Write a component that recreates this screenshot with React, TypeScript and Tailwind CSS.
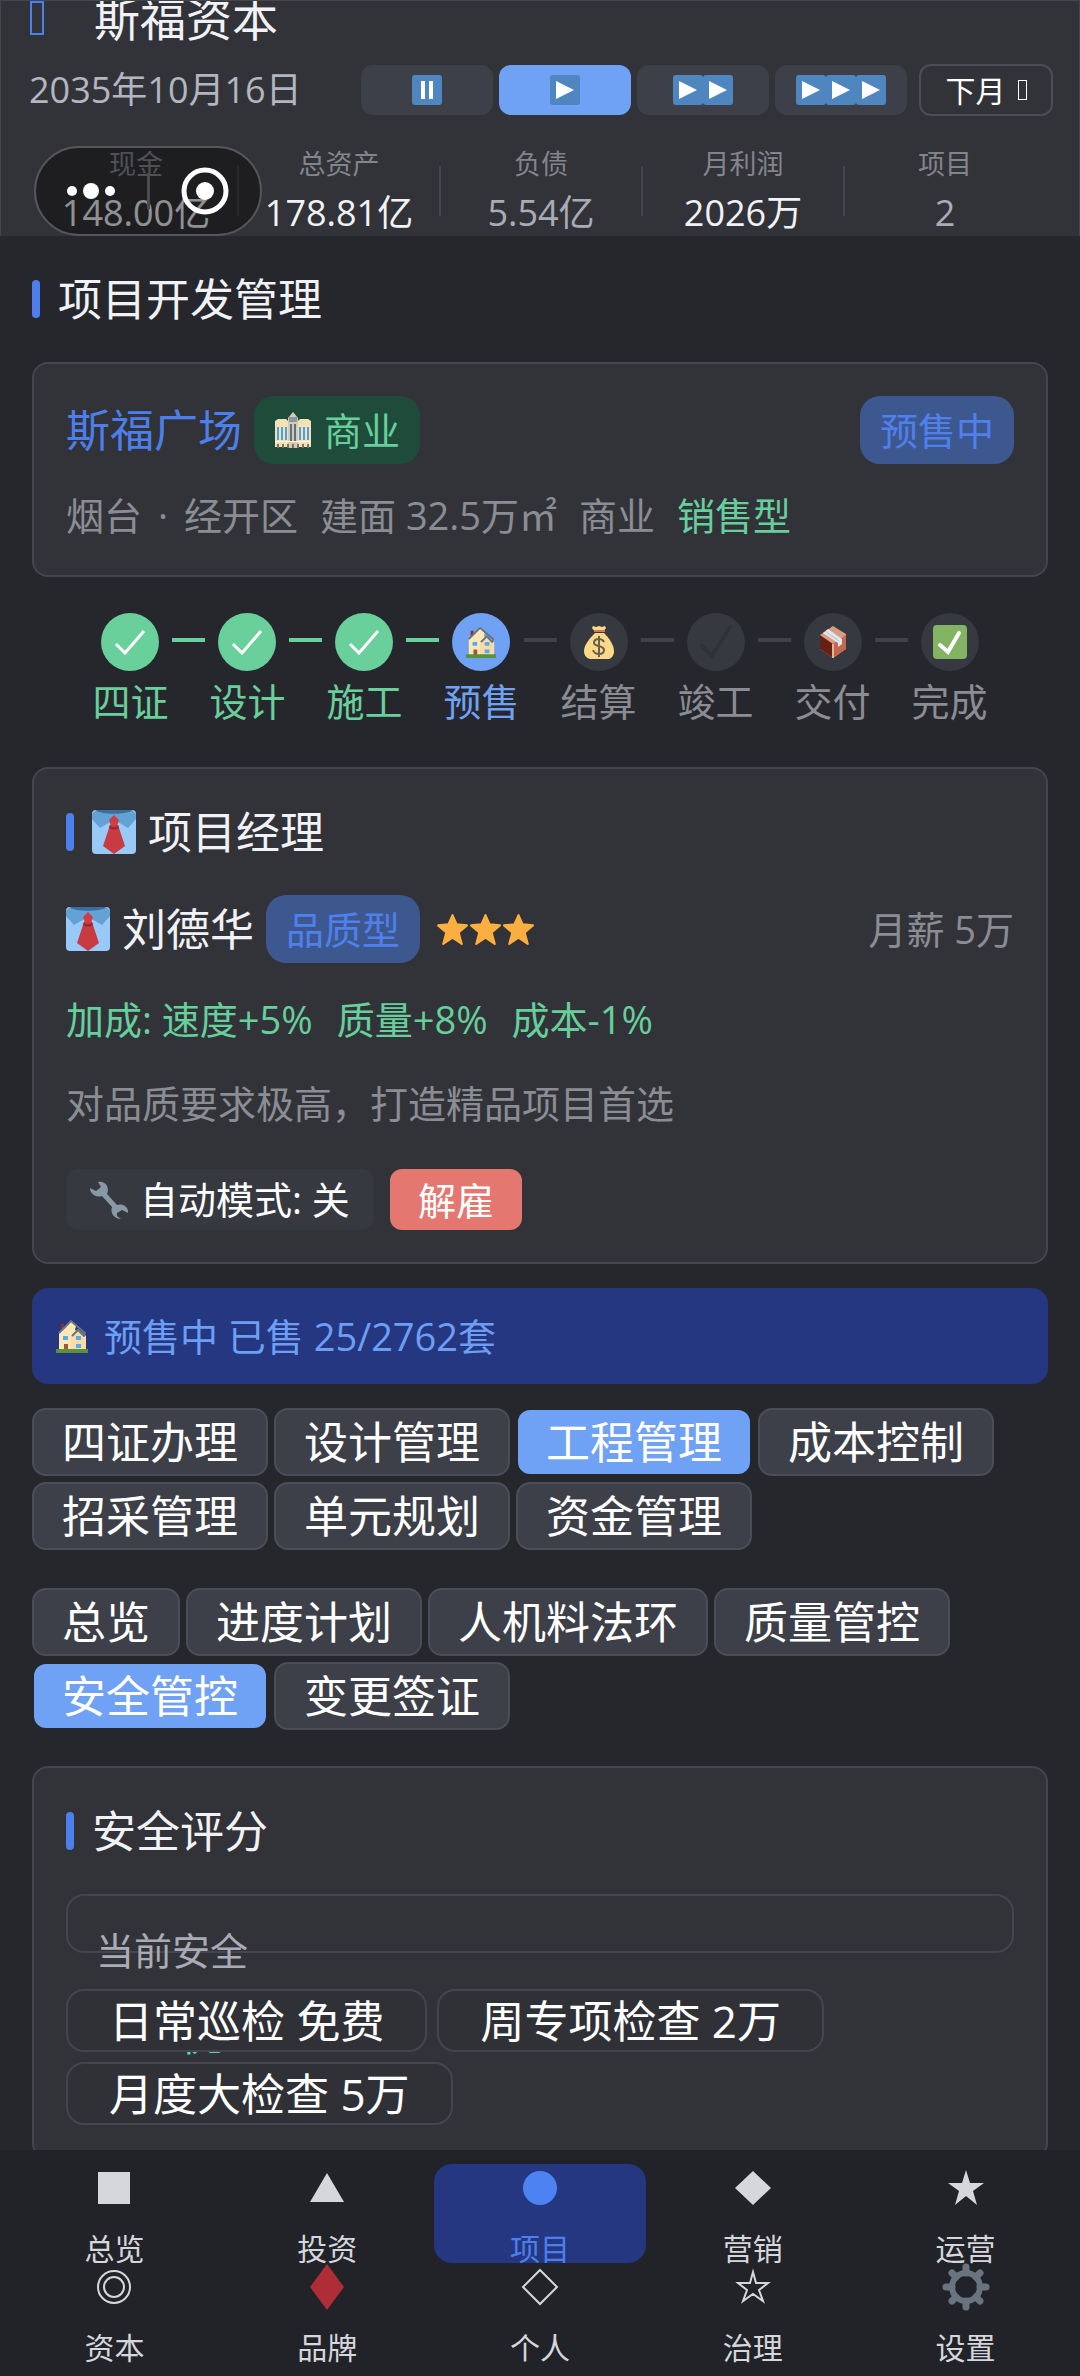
import { useState } from "react";
import type { ReactNode } from "react";
import clsx from "clsx";

// ─── Data ───────────────────────────────────────────────────────

const STATS = [
  { label: "现金", value: "148.00亿", strong: true },
  { label: "总资产", value: "178.81亿", strong: true },
  { label: "负债", value: "5.54亿", strong: false },
  { label: "月利润", value: "2026万", strong: true },
  { label: "项目", value: "2", strong: false },
];

type StepState = "done" | "active" | "todo";

const STEPS: { label: string; state: StepState; icon: ReactNode }[] = [
  { label: "四证", state: "done", icon: <CheckThin /> },
  { label: "设计", state: "done", icon: <CheckThin /> },
  { label: "施工", state: "done", icon: <CheckThin /> },
  { label: "预售", state: "active", icon: <House className="size-8" /> },
  { label: "结算", state: "todo", icon: <MoneyBag /> },
  { label: "竣工", state: "todo", icon: <CheckDark /> },
  { label: "交付", state: "todo", icon: <Parcel /> },
  { label: "完成", state: "todo", icon: <CheckBox /> },
];

const MODULE_TABS = ["四证办理", "设计管理", "工程管理", "成本控制", "招采管理", "单元规划", "资金管理"];
const ENGINEERING_TABS = ["总览", "进度计划", "人机料法环", "质量管控", "安全管控", "变更签证"];
const CHECKS = ["日常巡检 免费", "周专项检查 2万", "月度大检查 5万"];

const NAV = [
  { label: "总览", icon: <NavSquare /> },
  { label: "投资", icon: <NavTriangle /> },
  { label: "项目", icon: <NavDot /> },
  { label: "营销", icon: <NavDiamond /> },
  { label: "运营", icon: <NavStar /> },
  { label: "资本", icon: <NavRings /> },
  { label: "品牌", icon: <NavRedDiamond /> },
  { label: "个人", icon: <NavDiamondOutline /> },
  { label: "治理", icon: <NavStarOutline /> },
  { label: "设置", icon: <NavGear /> },
];

// ─── Emoji icons ────────────────────────────────────────────────

function PlayKey() {
  return (
    <svg viewBox="0 0 30 30" className="size-[30px]" aria-hidden="true">
      <rect width="30" height="30" rx="3" fill="#4f86bf" />
      <path d="M6 6v18l18-9z" fill="#fff" />
    </svg>
  );
}

function PauseKey() {
  return (
    <svg viewBox="0 0 30 30" className="size-[30px]" aria-hidden="true">
      <rect width="30" height="30" rx="3" fill="#4f86bf" />
      <path d="M9 6h4v18H9zM17 6h4v18h-4z" fill="#fff" />
    </svg>
  );
}

function CheckThin() {
  return (
    <svg viewBox="0 0 32 26" className="w-8" fill="none" stroke="#fff" strokeWidth="3" aria-hidden="true">
      <path d="M2 15l9 9L30 2" />
    </svg>
  );
}

function CheckDark() {
  return (
    <svg viewBox="0 0 36 36" className="size-9" fill="none" stroke="#2f3239" strokeWidth="4" strokeLinecap="round" aria-hidden="true">
      <path d="M4 22l10 10L32 3" />
    </svg>
  );
}

function CheckBox() {
  return (
    <svg viewBox="0 0 34 34" className="size-[34px]" aria-hidden="true">
      <rect width="34" height="34" rx="4" fill="#82b463" />
      <path d="M7 20l8 7L26 8" fill="none" stroke="#fff" strokeWidth="4" strokeLinecap="round" />
    </svg>
  );
}

function House({ className }: { className?: string }) {
  return (
    <svg viewBox="0 0 32 34" className={className} aria-hidden="true">
      <path d="M5 5h3v8H5z" fill="#8c2f33" />
      <path d="M3 14L15 2l5 5-1 4 9 5v15H3z" fill="#ffe8b6" />
      <path d="M15 31V17l7-7 8 7v14z" fill="#fbdba6" />
      <path d="M3 14L15 2l14 12-1 3-6-6-6 6" fill="none" stroke="#66757f" strokeWidth="2" strokeLinejoin="round" />
      <path d="M7 17h5v4H7zM20 17h5v4h-5zM20 25h5v4h-5z" fill="#55acee" />
      <path d="M8 25h4v6H8z" fill="#a0563c" />
      <path d="M0 30h32v4H0z" fill="#5c913b" />
    </svg>
  );
}

function MoneyBag() {
  return (
    <svg viewBox="0 0 30 34" className="h-[34px]" aria-hidden="true">
      <path d="M9 1l3 1 3-1 3 1 3-1 1 2-3 4h-8L8 3z" fill="#fdd888" />
      <path d="M11 8h9c5 5 10 12 10 18 0 4-2 7-5 8H6c-4-1-6-4-6-8C0 20 6 13 11 8z" fill="#fdd888" />
      <path d="M10 6h11" stroke="#d47a52" strokeWidth="2" />
      <path d="M20 17c-1-2-3-3-5-3-3 0-5 1-5 4 0 4 10 2 10 7 0 3-2 4-5 4s-5-1-6-4M15 11v21" fill="none" stroke="#67604f" strokeWidth="2" />
    </svg>
  );
}

function Parcel() {
  return (
    <svg viewBox="0 0 28 34" className="h-[34px]" aria-hidden="true">
      <path d="M1 10L14 1l13 8v15L14 33 1 24z" fill="#d99e82" />
      <path d="M1 10l13 9v14L1 24z" fill="#662113" />
      <path d="M14 19l13-9v14l-13 9z" fill="#c1694f" />
      <path d="M13 19h2v14h-2z" fill="#e8b29a" />
      <path d="M4 8l5-4 14 10v5l-4 3v-4z" fill="#e1e8ed" />
      <path d="M6 6l14 10" stroke="#b8c0c6" strokeWidth="1" />
    </svg>
  );
}

function Shirt() {
  return (
    <svg viewBox="0 0 44 44" className="size-11 shrink-0" aria-hidden="true">
      <rect width="44" height="44" rx="4" fill="#98c9f7" />
      <path d="M0 4L4 0h36l4 4v5l-8 9-10-6h-8L8 18 0 9z" fill="#62a2d4" />
      <path d="M4 0h36c-3 5-33 5-36 0z" fill="#3b6e9c" />
      <path d="M22 5l5 5-2 6h-6l-2-6z" fill="#d03e45" />
      <path d="M18 15h8l7 21-11 8-11-8z" fill="#c93b43" />
      <path d="M18 15c2 3 6 3 8 0l1 3c-3 2-7 2-10 0z" fill="#9c2732" />
    </svg>
  );
}

function Building() {
  return (
    <svg viewBox="0 0 38 36" className="w-[38px]" aria-hidden="true">
      <path d="M1 9l3-2h8l2 2h10l2-2h8l3 2v26H1z" fill="#f2e2b8" />
      <path d="M14 6l5-6 5 6v30H14z" fill="#d8ccae" />
      <path d="M15 5h8v5h-8z" fill="#8899a6" />
      <path d="M3 15h2v13H3zM7 15h2v13H7zM11 15h2v13h-2zM25 15h2v13h-2zM29 15h2v13h-2zM33 15h2v13h-2z" fill="#4f9ee0" />
      <path d="M16 12h2v17h-2zM20 12h2v17h-2z" fill="#58728c" />
      <path d="M1 29h36v1H1z" fill="#fff6dd" />
      <path d="M3 32h2v4H3zM8 32h2v4H8zM13 32h2v4h-2zM18 32h2v4h-2zM23 32h2v4h-2zM28 32h2v4h-2zM33 32h2v4h-2z" fill="#7d6f62" />
    </svg>
  );
}

function Wrench() {
  return (
    <svg viewBox="0 0 38 38" className="size-[38px]" aria-hidden="true">
      <path
        d="M8 1c7-2 12 5 9 12l10 11c6-2 12 2 11 8l-6-3-5 3v3l4 3c-7 0-11-6-9-12L12 15C6 17 0 13 0 7l6 3 5-4z"
        fill="#8899a6"
      />
    </svg>
  );
}

function GoldStar() {
  return (
    <svg viewBox="0 0 32 32" className="w-[33px]" aria-hidden="true">
      <path
        d="M16 2l4 9 10 1-8 7 3 11-9-6-9 6 3-11-8-7 10-1z"
        fill="#fbaf40"
        stroke="#fbaf40"
        strokeWidth="2"
        strokeLinejoin="round"
      />
    </svg>
  );
}

// ─── Nav icons ──────────────────────────────────────────────────

const STAR_PATH = "M24 6l4 13h14l-11 8 4 14-11-9-11 9 4-14-11-8h14z";

function NavIcon({ children }: { children: ReactNode }) {
  return (
    <svg viewBox="0 0 48 48" className="size-12 shrink-0" aria-hidden="true">
      {children}
    </svg>
  );
}

function NavSquare() {
  return <NavIcon><path d="M8 8h32v32H8z" fill="currentColor" /></NavIcon>;
}

function NavTriangle() {
  return <NavIcon><path d="M24 9l17 29H7z" fill="currentColor" /></NavIcon>;
}

function NavDot() {
  return <NavIcon><circle cx="24" cy="24" r="17" fill="#4c82f2" /></NavIcon>;
}

function NavDiamond() {
  return <NavIcon><path d="M24 7l18 17-18 17L6 24z" fill="currentColor" /></NavIcon>;
}

function NavStar() {
  return <NavIcon><path d={STAR_PATH} fill="currentColor" /></NavIcon>;
}

function NavRings() {
  return (
    <NavIcon>
      <g fill="none" stroke="currentColor" strokeWidth="2">
        <circle cx="24" cy="24" r="16" />
        <circle cx="24" cy="24" r="10" />
      </g>
    </NavIcon>
  );
}

function NavRedDiamond() {
  return <NavIcon><path d="M24 1l17 23-17 23L7 24z" fill="#ae2d37" /></NavIcon>;
}

function NavDiamondOutline() {
  return <NavIcon><path d="M24 7l17 17-17 17L7 24z" fill="none" stroke="currentColor" strokeWidth="2" /></NavIcon>;
}

function NavStarOutline() {
  return (
    <NavIcon>
      <path d="M24 9l3 11h12l-9 7 4 11-10-7-10 7 4-11-9-7h12z" fill="none" stroke="currentColor" strokeWidth="2" />
    </NavIcon>
  );
}

function NavGear() {
  return (
    <NavIcon>
      <circle cx="24" cy="24" r="14" fill="none" stroke="#697480" strokeWidth="6" />
      <path
        d="M24 4v6M24 38v6M4 24h6M38 24h6M10 10l4 4M34 34l4 4M10 38l4-4M34 14l4-4"
        stroke="#697480"
        strokeWidth="7"
        strokeLinecap="round"
      />
    </NavIcon>
  );
}

// ─── Shared parts ───────────────────────────────────────────────

function Card({ className, children }: { className?: string; children: ReactNode }) {
  return (
    <section className={clsx("rounded-2xl border-2 border-[#44464e] bg-[#323338] p-8", className)}>
      {children}
    </section>
  );
}

function Heading({ children }: { children: ReactNode }) {
  return (
    <h2 className="flex items-center gap-[18px] text-[44px] leading-[62px] text-[#f1f2f6]">
      <span className="h-[38px] w-2 rounded-full bg-[#4c7fec]" />
      {children}
    </h2>
  );
}

function Badge({ tone, children }: { tone: "green" | "blue"; children: ReactNode }) {
  return (
    <span
      className={clsx(
        "flex h-[68px] items-center gap-3 rounded-[20px] px-5 text-[38px]",
        tone === "green" ? "bg-[#1f4b3b] text-[#66cf9b]" : "bg-[#3d588f] text-[#5080ec]",
      )}
    >
      {children}
    </span>
  );
}

function Tabs({ items, active, onChange }: { items: string[]; active: string; onChange: (item: string) => void }) {
  return (
    <div className="flex flex-wrap gap-[6px]">
      {items.map((item) => (
        <button
          key={item}
          type="button"
          onClick={() => onChange(item)}
          className={clsx(
            "h-[68px] rounded-[14px] border-2 px-7 text-[44px] leading-[60px] text-white",
            item === active ? "border-[#26272c] bg-[#6fa1f4]" : "border-[#4b4d57] bg-[#3e4049]",
          )}
        >
          {item}
        </button>
      ))}
    </div>
  );
}

// ─── Header ─────────────────────────────────────────────────────

function Header() {
  const [speed, setSpeed] = useState(1);

  return (
    <header className="relative shrink-0 overflow-hidden border border-b-0 border-[#44464e] bg-[#323338]">
      <div className="flex h-[34px] items-center gap-[50px] px-[29px]">
        <span className="h-[34px] w-[14px] shrink-0 border-2 border-[#4c7fec]" />
        <h1 className="text-[46px] leading-[34px] text-[#f1f2f6]">斯福资本</h1>
      </div>

      <div className="mt-[29px] flex items-center gap-[6px] pl-7 pr-[26px]">
        <time className="mr-auto text-[36px] leading-[50px] text-[#b3b5c0]">2035年10月16日</time>
        {[0, 1, 2, 3].map((level) => (
          <button
            key={level}
            type="button"
            aria-label={level === 0 ? "暂停" : `${level}倍速`}
            onClick={() => setSpeed(level)}
            className={clsx(
              "flex h-[50px] w-[132px] items-center justify-center rounded-xl",
              level === speed ? "bg-[#6fa1f4]" : "bg-[#3e4049]",
            )}
          >
            {level === 0 ? <PauseKey /> : Array.from({ length: level }, (_, i) => <PlayKey key={i} />)}
          </button>
        ))}
        <button
          type="button"
          className="ml-[6px] flex h-[52px] w-[134px] items-center justify-center gap-3 rounded-xl border-2 border-[#4b4d57] text-[30px] text-white"
        >
          下月
          <span className="h-5 w-[9px] border border-white" />
        </button>
      </div>

      <dl className="mt-[29px] flex h-[91px] items-center px-[34px]">
        {STATS.map((stat, i) => (
          <div key={stat.label} className="flex flex-1 items-center">
            {i > 0 && <span className="h-[50px] w-[2px] bg-[#44464e]" />}
            <div className="flex-1 text-center">
              <dt className="text-[27px] leading-9 text-[#83858c]">{stat.label}</dt>
              <dd className={clsx("mt-2 text-[36px] leading-[46px]", stat.strong ? "text-[#f1f2f6]" : "text-[#a9abb7]")}>
                {stat.value}
              </dd>
            </div>
          </div>
        ))}
      </dl>

      {/* Host app capsule, floats over the first stat */}
      <div className="absolute bottom-0 left-[33px] flex h-[90px] w-[228px] items-center rounded-full border-2 border-[#55565a] bg-black/40">
        <button type="button" aria-label="更多" className="flex flex-1 justify-center">
          <svg viewBox="0 0 48 20" className="w-12" fill="#fff" aria-hidden="true">
            <circle cx="5" cy="10" r="5" />
            <circle cx="24" cy="10" r="8" />
            <circle cx="43" cy="10" r="5" />
          </svg>
        </button>
        <span className="h-9 w-[3px] bg-[#4a4b4e]" />
        <button type="button" aria-label="关闭" className="flex flex-1 justify-center">
          <svg viewBox="0 0 48 48" className="size-12" aria-hidden="true">
            <circle cx="24" cy="24" r="21" fill="none" stroke="#fff" strokeWidth="5" />
            <circle cx="24" cy="24" r="9" fill="#fff" />
          </svg>
        </button>
      </div>
    </header>
  );
}

// ─── Project sections ───────────────────────────────────────────

function Stepper() {
  return (
    <ol className="mt-9 flex justify-center">
      {STEPS.map((step, i) => (
        <li key={step.label} className="flex">
          {i > 0 && (
            <span
              className={clsx(
                "mx-1 mt-[25px] h-1 w-[33px]",
                STEPS[i - 1].state === "done" ? "bg-[#69cf9b]" : "bg-[#41434b]",
              )}
            />
          )}
          <div className="flex flex-col items-center">
            <span
              className={clsx(
                "flex size-[58px] items-center justify-center rounded-full",
                step.state === "done" && "bg-[#69d09b]",
                step.state === "active" && "bg-[#6fa1f4]",
                step.state === "todo" && "bg-[#363940]",
              )}
            >
              {step.icon}
            </span>
            <span
              className={clsx(
                "text-[38px] leading-[60px]",
                step.state === "done" && "text-[#69cf9b]",
                step.state === "active" && "text-[#6fa1f4]",
                step.state === "todo" && "text-[#8b8d94]",
              )}
            >
              {step.label}
            </span>
          </div>
        </li>
      ))}
    </ol>
  );
}

function ManagerCard() {
  const [auto, setAuto] = useState(false);

  return (
    <Card className="mt-9">
      <Heading>
        <span className="flex items-center gap-3">
          <Shirt />
          项目经理
        </span>
      </Heading>

      <div className="mt-8 flex items-center">
        <Shirt />
        <span className="ml-3 text-[44px] leading-[60px] text-[#f1f2f6]">刘德华</span>
        <span className="ml-3">
          <Badge tone="blue">品质型</Badge>
        </span>
        <span className="ml-4 flex" role="img" aria-label="三星">
          <GoldStar />
          <GoldStar />
          <GoldStar />
        </span>
        <span className="ml-auto text-[38px] text-[#8b8d94]">月薪 5万</span>
      </div>

      <p className="mt-7 flex gap-6 text-[38px] leading-[56px] text-[#66cf9b]">
        <span>加成: 速度+5%</span>
        <span>质量+8%</span>
        <span>成本-1%</span>
      </p>
      <p className="mt-7 text-[38px] leading-[56px] text-[#8b8d94]">对品质要求极高，打造精品项目首选</p>

      <div className="mt-[38px] flex gap-4">
        <button
          type="button"
          onClick={() => setAuto(!auto)}
          className="flex h-[61px] items-center gap-3 rounded-xl bg-[#363940] px-6 text-[38px] text-white"
        >
          <Wrench />
          自动模式: {auto ? "开" : "关"}
        </button>
        <button type="button" className="h-[61px] rounded-xl bg-[#e47871] px-7 text-[38px] leading-[56px] text-white">
          解雇
        </button>
      </div>
    </Card>
  );
}

function SafetyCard() {
  return (
    <Card className="mt-9">
      <Heading>安全评分</Heading>

      {/* The box is shorter than its content, the grade runs in under the buttons */}
      <div className="mt-8 h-[59px] rounded-[18px] border-2 border-[#44464e] px-7 pt-[26px]">
        <div className="text-[38px] leading-[56px] text-[#a9abb7]">当前安全</div>
        <div className="pl-[84px] text-[44px] leading-[112px] text-[#66cf9b]">优</div>
      </div>

      <div className="relative mt-9 flex flex-wrap gap-[10px]">
        {CHECKS.map((check) => (
          <button
            key={check}
            type="button"
            className="h-[63px] rounded-[18px] border-2 border-[#44464e] bg-[#303137] px-[41px] text-[44px] leading-[56px] text-white"
          >
            {check}
          </button>
        ))}
      </div>
    </Card>
  );
}

// ─── Bottom navigation ──────────────────────────────────────────

function BottomNav() {
  const [active, setActive] = useState("项目");

  return (
    <nav className="relative grid shrink-0 grid-cols-5 bg-[#212328] px-2 py-[14px]">
      {NAV.map((item) => (
        <button
          key={item.label}
          type="button"
          onClick={() => setActive(item.label)}
          className={clsx(
            "flex h-[99px] flex-col items-center gap-5 rounded-[18px]",
            item.label === active ? "bg-[#253781] text-[#4c7fec]" : "text-[#d5d7dc]",
          )}
        >
          {item.icon}
          <span className="text-[30px] leading-[34px]">{item.label}</span>
        </button>
      ))}
    </nav>
  );
}

// ─── App ────────────────────────────────────────────────────────

export default function App() {
  const [moduleTab, setModuleTab] = useState("工程管理");
  const [engineeringTab, setEngineeringTab] = useState("安全管控");

  return (
    <div className="flex h-screen flex-col overflow-hidden bg-[#26272c] font-['Open_Sans','Noto_Sans_CJK_SC',sans-serif] font-[390]">
      <Header />

      <main className="min-h-0 flex-1 overflow-hidden px-8 pt-8">
        <Heading>项目开发管理</Heading>

        <Card className="mt-8">
          <div className="flex items-center gap-3">
            <span className="text-[44px] leading-[60px] text-[#4c7fec]">斯福广场</span>
            <Badge tone="green">
              <Building />
              商业
            </Badge>
            <span className="ml-auto">
              <Badge tone="blue">预售中</Badge>
            </span>
          </div>
          <p className="mt-[23px] flex gap-[22px] text-[38px] leading-[56px] text-[#8b8d94]">
            <span className="flex gap-4">
              <span>烟台</span>
              <span>·</span>
              <span>经开区</span>
            </span>
            <span>建面 32.5万㎡</span>
            <span>商业</span>
            <span className="text-[#66cf9b]">销售型</span>
          </p>
        </Card>

        <Stepper />
        <ManagerCard />

        <div className="mt-6 flex h-24 items-center gap-4 rounded-2xl bg-[#253781] px-6 text-[38px] text-[#6c9ff3]">
          <House className="w-8" />
          预售中 已售 25/2762套
        </div>

        <div className="mt-6 flex flex-col gap-[38px]">
          <Tabs items={MODULE_TABS} active={moduleTab} onChange={setModuleTab} />
          <Tabs items={ENGINEERING_TABS} active={engineeringTab} onChange={setEngineeringTab} />
        </div>

        <SafetyCard />
      </main>

      <BottomNav />
    </div>
  );
}
